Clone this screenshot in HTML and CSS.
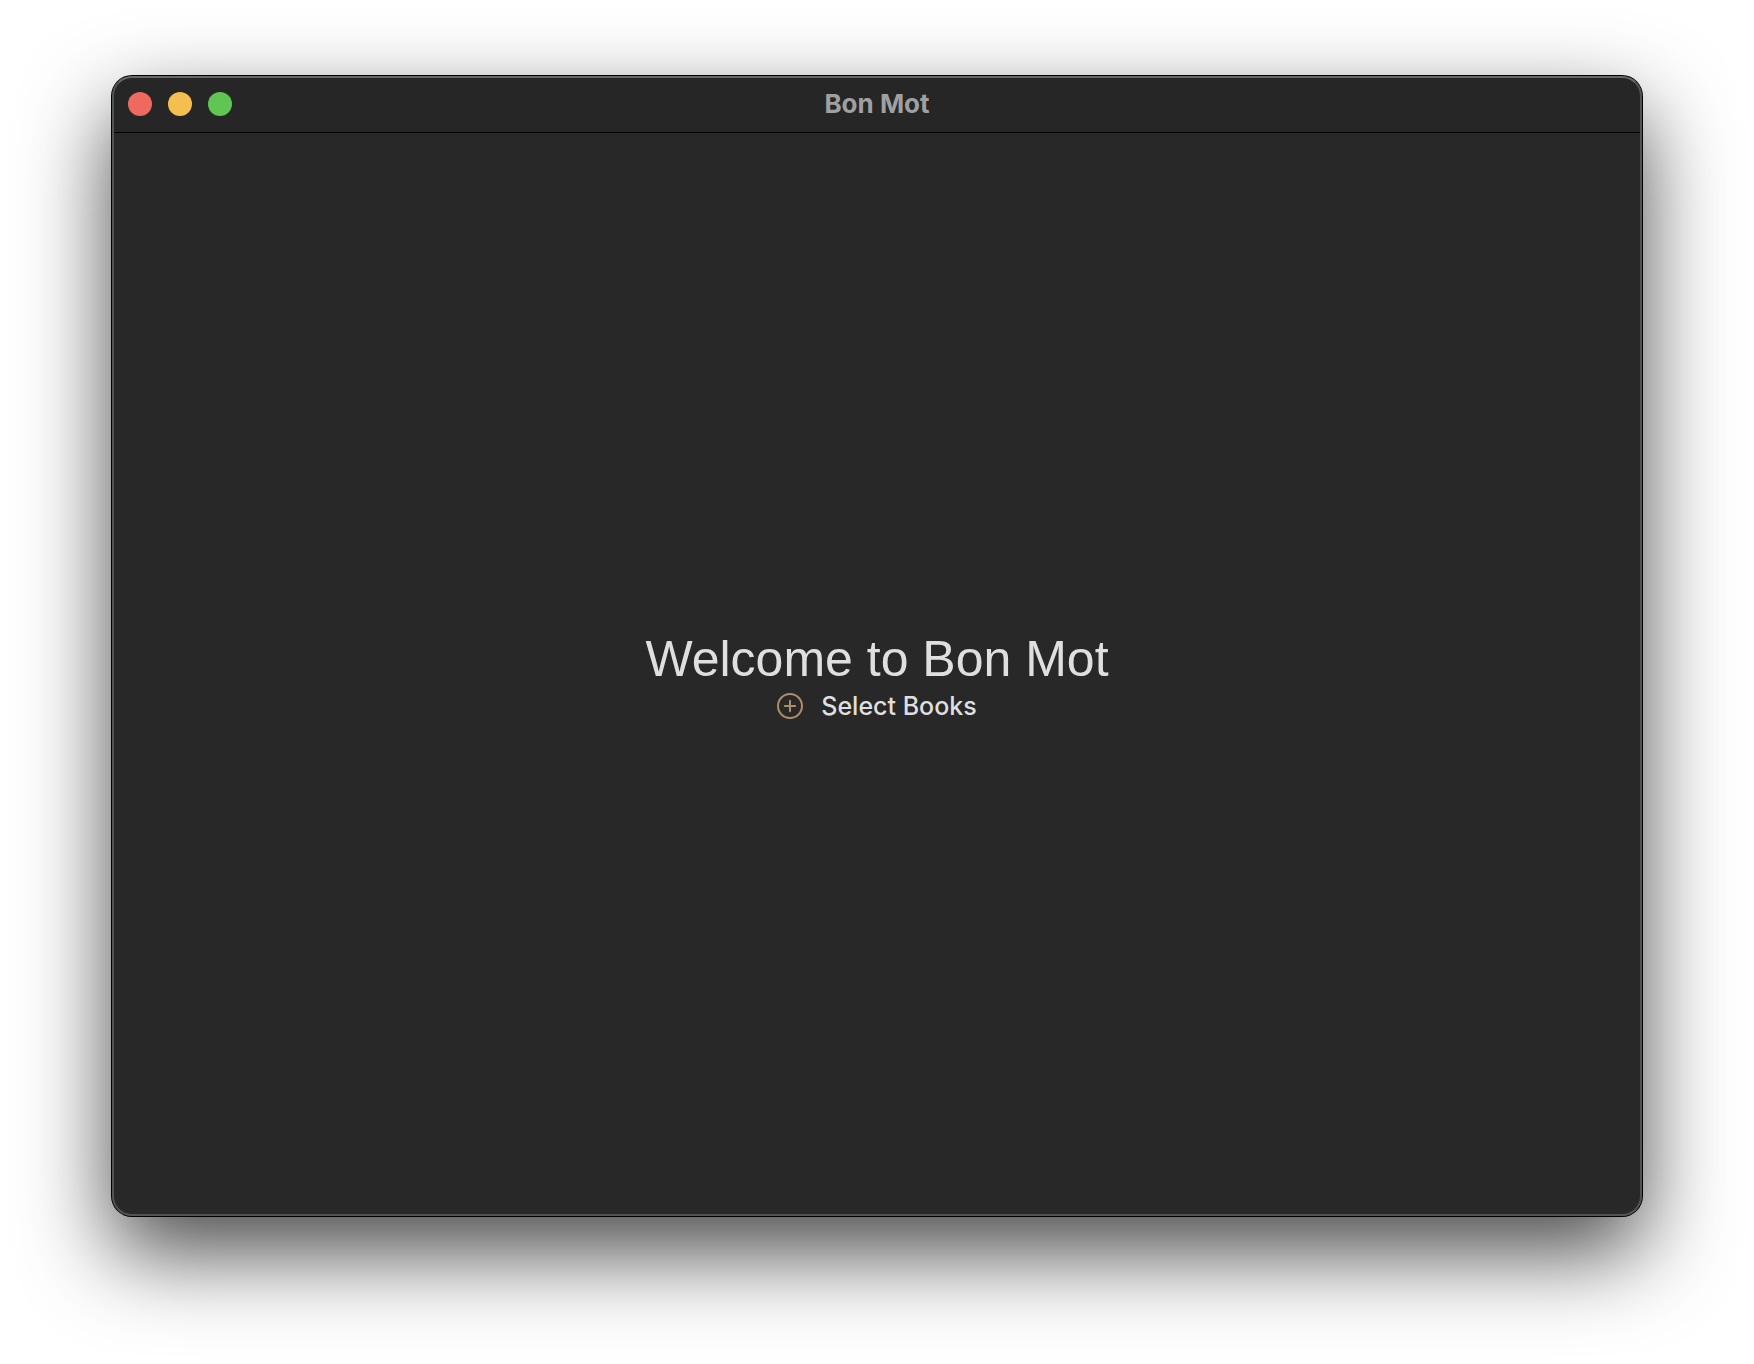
FILE: index.html
```html
<!DOCTYPE html>
<html lang="en">
<head>
  <meta charset="utf-8">
  <meta name="viewport" content="width=device-width, initial-scale=1">
  <title>Bon Mot</title>
  <link rel="stylesheet" href="styles.css">
</head>
<body>
  <div class="window">
    <header class="titlebar">
      <div class="controls">
        <button class="control control-close" type="button" aria-label="Close"></button>
        <button class="control control-minimize" type="button" aria-label="Minimize"></button>
        <button class="control control-zoom" type="button" aria-label="Zoom"></button>
      </div>
      <span class="title">Bon Mot</span>
    </header>
    <main class="welcome">
      <h1 class="heading">Welcome to Bon Mot</h1>
      <button class="select-books" type="button">
        <svg class="plus-icon" viewBox="0 0 26 26" aria-hidden="true">
          <circle cx="13" cy="13" r="12"/>
          <path d="M13 7.8v10.4M7.8 13h10.4"/>
        </svg>
        Select Books
      </button>
    </main>
  </div>
</body>
</html>
```
FILE: styles.css
```css
* {
  box-sizing: border-box;
}

body {
  margin: 0;
  min-height: 100vh;
  display: flex;
  padding: 76px 112px 148px;
  background: #fff;
  color: #dfdfdf;
  font-family: Inter, "Liberation Sans", sans-serif;
}

.window {
  flex: 1;
  display: flex;
  flex-direction: column;
  position: relative;
  border-radius: 20px;
  background: #282828;
  box-shadow: 0 0 0 1px #000, 0 36px 88px rgba(0, 0, 0, 0.72);
}

/* Light rim drawn over the title bar and the content */
.window::after {
  content: "";
  position: absolute;
  inset: 0;
  border: 2px solid #535353;
  border-top-color: #686868;
  border-radius: 20px;
  pointer-events: none;
}

.titlebar {
  display: grid;
  grid-template-columns: 1fr auto 1fr;
  align-items: center;
  height: 57px;
  padding: 0 16px;
  border-bottom: 1px solid #000;
  border-radius: 20px 20px 0 0;
  background: #262626;
}

.controls {
  display: flex;
  gap: 16px;
}

.control {
  width: 24px;
  height: 24px;
  padding: 0;
  border: 0;
  border-radius: 50%;
}

.control-close {
  background: #ee6a5f;
}

.control-minimize {
  background: #f5bf4f;
}

.control-zoom {
  background: #61c554;
}

.title {
  color: #a0a0a0;
  font-size: 26px;
  font-weight: 700;
  line-height: 32px;
}

.welcome {
  flex: 1;
  display: flex;
  flex-direction: column;
  align-items: center;
  justify-content: center;
}

.heading {
  margin: 0;
  font-family: "Liberation Sans", Arial, sans-serif;
  font-size: 50px;
  font-weight: 400;
  line-height: 62px;
}

.select-books {
  display: flex;
  align-items: center;
  gap: 18px;
  padding: 0;
  border: 0;
  background: none;
  color: inherit;
  font: 500 25px/32px Inter, "Liberation Sans", sans-serif;
}

.plus-icon {
  width: 26px;
  height: 26px;
  fill: none;
  stroke: #ac8e68;
  stroke-width: 2;
  stroke-linecap: round;
}
```
